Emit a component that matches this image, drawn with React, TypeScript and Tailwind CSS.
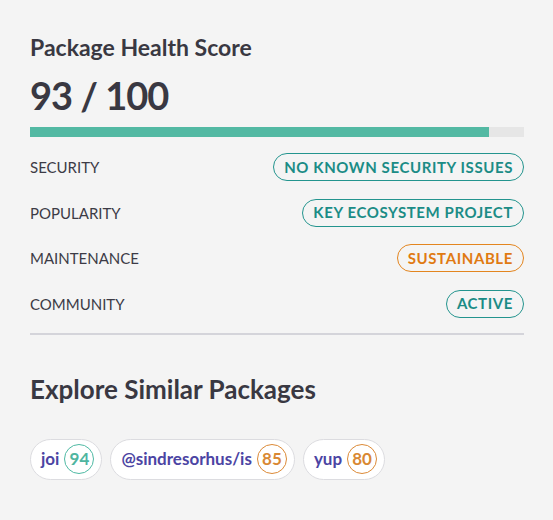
import React from 'react';

type Tone = 'teal' | 'orange';

const rows: { label: string; value: string; tone: Tone }[] = [
  { label: 'SECURITY', value: 'NO KNOWN SECURITY ISSUES', tone: 'teal' },
  { label: 'POPULARITY', value: 'KEY ECOSYSTEM PROJECT', tone: 'teal' },
  { label: 'MAINTENANCE', value: 'SUSTAINABLE', tone: 'orange' },
  { label: 'COMMUNITY', value: 'ACTIVE', tone: 'teal' },
];

const similar: { name: string; score: number; tone: Tone }[] = [
  { name: 'joi', score: 94, tone: 'teal' },
  { name: '@sindresorhus/is', score: 85, tone: 'orange' },
  { name: 'yup', score: 80, tone: 'orange' },
];

function Badge({ text, tone }: { text: string; tone: Tone }) {
  const cls =
    tone === 'teal'
      ? 'border-[#23948e] text-[#1b8c86]'
      : 'border-[#e3851f] text-[#e07a12]';
  return (
    <span
      className={`inline-flex h-[28px] items-center rounded-full border px-[10px] text-[15px] font-bold tracking-[0.6px] ${cls}`}
    >
      {text}
    </span>
  );
}

export default function App() {
  return (
    <div
      className="min-h-[520px] w-full bg-[#f4f4f4] px-[30px] pt-[33px] text-[#393842]"
      style={{ fontFamily: 'Lato, "Open Sans", sans-serif' }}
    >
      <h2 className="text-[23px] font-bold leading-[28px]">Package Health Score</h2>
      <div className="mt-[10px] text-[38px] font-bold leading-[48px] tracking-[-1px]">93 / 100</div>

      <div className="mt-[8px] h-[10px] w-[494px] bg-[#e6e6e6]">
        <div className="h-full bg-[#53b9a3]" style={{ width: '93%' }} />
      </div>

      <div className="mt-[16px] flex w-[494px] flex-col gap-[17.5px]">
        {rows.map((r) => (
          <div key={r.label} className="flex h-[28px] items-center justify-between">
            <span className="text-[15px] leading-[20px] text-[#3c3b46]">{r.label}</span>
            <Badge text={r.value} tone={r.tone} />
          </div>
        ))}
      </div>

      <div className="mt-[15px] h-[2px] w-[494px] bg-[#d4d4da]" />

      <h2 className="mt-[38px] text-[26px] font-bold leading-[32px]">Explore Similar Packages</h2>

      <div className="mt-[34px] flex gap-[8px]">
        {similar.map((p) => (
          <div
            key={p.name}
            className="flex h-[41px] items-center gap-[5px] rounded-full border border-[#dcdce0] bg-white pl-[10px] pr-[7px]"
          >
            <span className="text-[17px] font-bold text-[#4b44a3]">{p.name}</span>
            <span
              className={`flex h-[30px] w-[30px] items-center justify-center rounded-full border text-[17px] font-bold ${
                p.tone === 'teal'
                  ? 'border-[#4fbaa4] text-[#4fb5a0]'
                  : 'border-[#dc8a37] text-[#d98833]'
              }`}
            >
              {p.score}
            </span>
          </div>
        ))}
      </div>
    </div>
  );
}
